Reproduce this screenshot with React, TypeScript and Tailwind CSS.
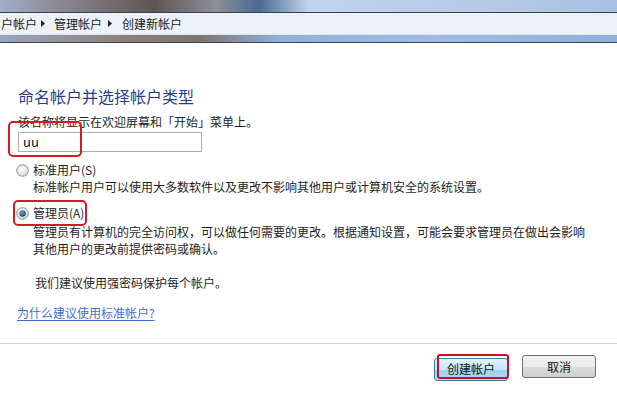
import React from 'react';

const font = { fontFamily: '"Noto Sans CJK SC", "Liberation Sans", sans-serif' };

const Radio: React.FC<{ checked?: boolean }> = ({ checked }) => (
  <svg width="13" height="13" viewBox="0 0 13 13" className="shrink-0">
    <defs>
      <radialGradient id="rfill" cx="0.4" cy="0.35" r="0.7">
        <stop offset="0" stopColor="#ffffff" />
        <stop offset="1" stopColor="#d6d6d6" />
      </radialGradient>
      <radialGradient id="rdot" cx="0.4" cy="0.35" r="0.7">
        <stop offset="0" stopColor="#6fa3d8" />
        <stop offset="1" stopColor="#123a6e" />
      </radialGradient>
    </defs>
    <circle cx="6.5" cy="6.5" r="5.8" fill="url(#rfill)" stroke="#8e8f8f" strokeWidth="1" />
    {checked && <circle cx="6.5" cy="6.5" r="3.2" fill="url(#rdot)" />}
  </svg>
);

const Arrow: React.FC<{ first?: boolean }> = ({ first }) => (
  <svg
    width="4"
    height="7"
    viewBox="0 0 4 7"
    className={first ? 'ml-[4px] mr-[9px] shrink-0' : 'ml-[6px] mr-[10px] shrink-0'}
  >
    <path d="M0 0 L4 3.5 L0 7 Z" fill="#222" />
  </svg>
);

const App: React.FC = () => {
  return (
    <div className="w-[617px] h-[399px] overflow-hidden bg-white text-[#1e1e1e]" style={font}>
      {/* window chrome */}
      <div className="h-[12px] bg-[linear-gradient(90deg,#9fb0c9_0%,#8a8790_10%,#5f5653_25%,#8d8f98_35%,#4a6a90_42%,#c2d4ec_50%,#b9cde8_70%,#a9c1e2_100%)]" />
      <div className="h-px bg-[#34404e]" />
      <div className="h-[21px] bg-[#edf1f8] flex items-center text-[12px] leading-none text-[#1a1a1a] whitespace-nowrap">
        <span className="ml-[1px]">户帐户</span>
        <Arrow first />
        <span>管理帐户</span>
        <Arrow />
        <span>创建新帐户</span>
      </div>
      <div className="h-px bg-[#dde5f0]" />
      <div className="h-[7px] bg-[linear-gradient(90deg,#9aa7bd_0%,#8e8078_20%,#7f7470_32%,#8fb0d8_45%,#9fbde2_70%,#8fb0da_100%)]" />
      <div className="h-px bg-[#3a4656]" />

      {/* content */}
      <div className="px-[18px] pt-[43px]">
        <h1 className="text-[16px] leading-[20px] text-[#1f3f91] font-normal">命名帐户并选择帐户类型</h1>
        <p className="mt-[8px] text-[12px] leading-[16px]">该名称将显示在欢迎屏幕和「开始」菜单上。</p>
        <div className="relative mt-[2px] w-[184px]">
          <div className="h-[20px] border border-[#abadb3] bg-white flex items-center px-[4px] text-[13px] text-[#111]">uu</div>
          <div className="absolute left-[-10px] top-[-11px] w-[74px] h-[36px] border-2 border-[#d21b24] rounded-[5px]" />
        </div>

        <div className="mt-[10px] flex items-center gap-[4px] ml-[-2px] h-[16px] text-[12px]">
          <Radio />
          <span>标准用户(S)</span>
        </div>
        <p className="ml-[15px] mt-px text-[12px] leading-[16px]">
          标准帐户用户可以使用大多数软件以及更改不影响其他用户或计算机安全的系统设置。
        </p>

        <div className="relative mt-[10px] flex items-center gap-[4px] ml-[-2px] h-[16px] text-[12px]">
          <Radio checked />
          <span>管理员(A)</span>
          <div className="absolute left-[-3px] top-[-5px] w-[74px] h-[26px] border-2 border-[#d21b24] rounded-[5px]" />
        </div>
        <p className="ml-[15px] mt-[2px] text-[12px] leading-[17px]">
          管理员有计算机的完全访问权，可以做任何需要的更改。根据通知设置，可能会要求管理员在做出会影响
          <br />
          其他用户的更改前提供密码或确认。
        </p>

        <p className="ml-[17px] mt-[18px] text-[12px] leading-[16px]">我们建议使用强密码保护每个帐户。</p>

        <a className="block mt-[14px] ml-[-1px] text-[12px] leading-[16px] text-[#3e6fcf] underline underline-offset-2">
          为什么建议使用标准帐户?
        </a>
      </div>

      <div className="mt-[22px] h-px bg-[#d2d2d2]" />

      <div className="flex justify-end gap-[14px] pr-[21px] pt-[11px]">
        <div className="relative">
          <button className="w-[74px] h-[23px] rounded-[3px] border border-[#3c7fb1] bg-[linear-gradient(#e5f4fc_0%,#c4e5f6_50%,#98d1ef_51%,#b3def5_100%)] text-[12px] text-[#111]">
            创建帐户
          </button>
          <div className="absolute left-[3px] top-[-1px] w-[72px] h-[25px] border-2 border-[#c8102e] rounded-[3px]" />
        </div>
        <button className="w-[74px] h-[23px] rounded-[3px] border border-[#707070] bg-[linear-gradient(#f2f2f2_0%,#ebebeb_50%,#dddddd_51%,#cfcfcf_100%)] text-[12px] text-[#111]">
          取消
        </button>
      </div>
    </div>
  );
};

export default App;
